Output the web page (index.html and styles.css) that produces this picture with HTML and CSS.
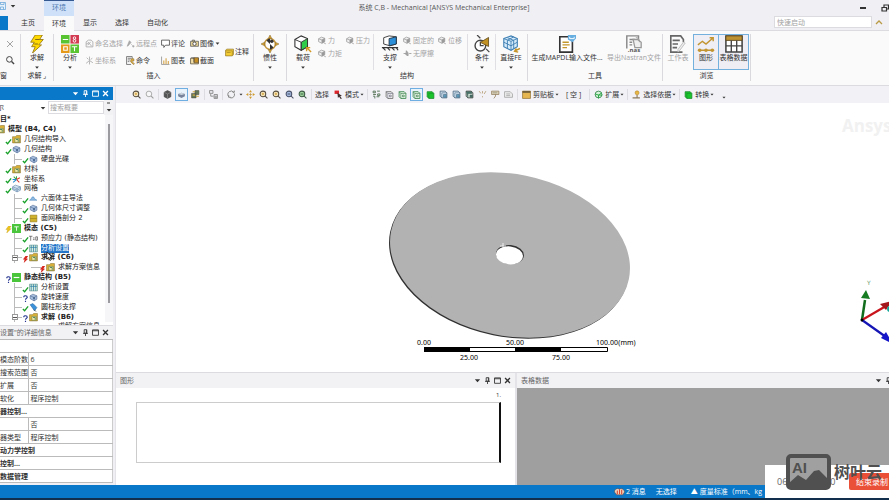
FILE: index.html
```html
<!DOCTYPE html>
<html lang="zh-CN">
<head>
<meta charset="utf-8">
<title>系统 C,B - Mechanical [ANSYS Mechanical Enterprise]</title>
<link rel="stylesheet" href="styles.css">
</head>
<body>
<svg class="sprite" aria-hidden="true">
  <symbol id="caret" viewBox="0 0 8 8"><path d="M1 2.5h6L4 6z" fill="currentColor"/></symbol>
  <symbol id="pin" viewBox="0 0 8 8"><path d="M2.5 .8h3v4h-3zM1.2 5h5.6M4 5v3M5 1v4" fill="none" stroke="currentColor" stroke-width="1"/></symbol>
  <symbol id="max" viewBox="0 0 8 8"><path d="M.6 1h6.8v6.200H.6zM.6 2h6.800" fill="none" stroke="currentColor" stroke-width="1"/></symbol>
  <symbol id="x" viewBox="0 0 8 8"><path d="M1.200 1.200l5.600 5.600M6.800 1.200L1.200 6.800" stroke="currentColor" stroke-width="1.500"/></symbol>
  <symbol id="thinx" viewBox="0 0 8 8"><path d="M1 1l6 6M7 1L1 7" stroke="#999" stroke-width=".9"/></symbol>
  <symbol id="search" viewBox="0 0 16 16"><circle cx="7" cy="7" r="4.500" fill="none" stroke="#444" stroke-width="1.600"/><path d="M10.500 10.500l4 4" stroke="#444" stroke-width="2.200"/></symbol>
  <symbol id="save" viewBox="0 0 16 16"><path d="M1 1h14v14H1zM5 1v4h7V1M5 15v-5h6v5" fill="#e7f1fb" stroke="#69a5d9" stroke-width="1.500"/></symbol>
  <symbol id="bolt" viewBox="0 0 16 20"><path d="M6 0h8l-3 5h4l-5 6h3L3 20l3-7H2l3-5H1z" fill="#ffd900" stroke="#9a7a16" stroke-width="1"/><path d="M6 5h5M5 10h4" stroke="#776018"/></symbol>
  <symbol id="analysis" viewBox="0 0 20 20"><path d="M0 0h9.500v9.500H0zM10.500 10.500H20V20h-9.500z" fill="#59c432"/><path d="M10.500 0H20v9.500h-9.500z" fill="#d23b52"/><path d="M0 10.500h9.500V20H0z" fill="#e69a1c"/><path d="M2 5h6M12 13h6M15 13v5M3 13v4h4v-4z" stroke="#fff" stroke-width="1.200" fill="none"/><circle cx="15" cy="3.400" r="1.400" fill="none" stroke="#fff"/><circle cx="15" cy="6.500" r="1.500" fill="none" stroke="#fff"/></symbol>
  <symbol id="named" viewBox="0 0 16 16"><path d="M2 14V5l4-3h5l3 3v9zM5 11l5-6M5 5l7 8M2 9l4-1" fill="none" stroke="#aaa" stroke-width="1.500"/></symbol>
  <symbol id="remote" viewBox="0 0 16 16"><path d="M2 13L6 3l3 3-6 7" fill="#aaa" stroke="#999"/><path d="M9 9l3 3" stroke="#aaa"/><circle cx="13" cy="13" r="2" fill="#aaa"/></symbol>
  <symbol id="axes-g" viewBox="0 0 16 16"><path d="M8 8V1M8 8l6 4M8 8l-6 5M3 3l3 3M13 4l-3 2M8 9v6" stroke="#aaa" stroke-width="1.500"/></symbol>
  <symbol id="axes" viewBox="0 0 16 16"><path d="M8 8V2M3 3l4 4" stroke="#3ba344" stroke-width="1.800"/><path d="M8 8l6-3M8 8l5 5" stroke="#d32" stroke-width="1.800"/><path d="M8 8l-6 5M1 8h6" stroke="#268bd0" stroke-width="1.800"/></symbol>
  <symbol id="comment" viewBox="0 0 16 16"><path d="M1 2h14v9H8l-3 4v-4H1z" fill="#fff" stroke="#444" stroke-width="1.400"/></symbol>
  <symbol id="camera" viewBox="0 0 16 16"><path d="M1 4h14v9H1zM4 4V2h4v2" fill="#ead594" stroke="#555" stroke-width="1.300"/><circle cx="8" cy="8.500" r="3" fill="#fff" stroke="#444" stroke-width="1.500"/></symbol>
  <symbol id="command" viewBox="0 0 16 16"><path d="M1 1h10v5M1 1v14h8M3 4h6M3 7h4M3 10h3" fill="none" stroke="#555" stroke-width="1.300"/><path d="M9 5h5v4h-4l5 5-2 1-5-5z" fill="#e4b343" stroke="#876b2d"/></symbol>
  <symbol id="chart" viewBox="0 0 16 16"><path d="M1 1v14h14" stroke="#777" stroke-width="1.200" fill="none"/><path d="M4 14V8h2v6M8 14V4h2v10M12 14V9h2v5" fill="#d5a64b"/></symbol>
  <symbol id="section" viewBox="0 0 16 16"><path d="M1 4h14v10H1z" fill="#f3e0a9" stroke="#544a35" stroke-width="1.300"/><path d="M7 3h8v9H7z" fill="#c48d26" stroke="#4b4234"/><path d="M2 3h5v8" fill="none" stroke="#444"/></symbol>
  <symbol id="note" viewBox="0 0 16 16"><path d="M1 4l2-2h12v10l-2 2H1z" fill="#f4cc34" stroke="#8d711e" stroke-width="1.200"/><path d="M1 5h12v8M3 8h7" fill="none" stroke="#8d711e"/></symbol>
  <symbol id="inertia" viewBox="0 0 20 20"><circle cx="10" cy="10" r="6" fill="#fff" stroke="#c4963b" stroke-width="1.700"/><path d="M10 0l2 4H8zM10 20l2-4H8zM0 10l4-2v4zM20 10l-4-2v4z" fill="#d6a02a" stroke="#876d34" stroke-width=".6"/><path d="M10 10L6 6a6 6 0 0 1 4-2zM10 10l4 4a6 6 0 0 1-4 2z" fill="#333"/><circle cx="12" cy="7" r="2" fill="#333"/></symbol>
  <symbol id="load" viewBox="0 0 20 20"><path d="M1 5l7-4 7 3v9l-7 4-7-4z" fill="#fff" stroke="#333" stroke-width="1.200"/><path d="M8 8l7-4v9l-7 4z" fill="#32cc4b" stroke="#333"/><path d="M1 5l7 3v9" fill="none" stroke="#333"/><path d="M19 19l-5-5M14 18v-4h4" stroke="#d39822" stroke-width="1.500" fill="none"/></symbol>
  <symbol id="cube-g" viewBox="0 0 16 16"><path d="M1 5l5-3 6 2v6l-5 3-6-3zM1 5l6 2v6M7 7l5-3M10 12l4 2" fill="#eee" stroke="#999" stroke-width="1.300"/><path d="M7 7l5-3v6l-5 3z" fill="#999"/></symbol>
  <symbol id="fric" viewBox="0 0 16 16"><path d="M1 8h5M15 8h-4M6 3l3 4v5l-4-2z" fill="#aaa" stroke="#999" stroke-width="1.500"/></symbol>
  <symbol id="support" viewBox="0 0 20 20"><path d="M3 3l6-2 8 1v8l-7 2-7-2z" fill="#fff" stroke="#333"/><path d="M9 4l8-2v8l-8 2z" fill="#2a8fd8" stroke="#234"/><path d="M1 14h18M2 14l3 3M7 14l3 3M12 14l3 3M17 14l2 3" stroke="#333" stroke-width="1.300"/></symbol>
  <symbol id="cond" viewBox="0 0 20 22"><circle cx="8" cy="13" r="6.500" fill="#fff" stroke="#444" stroke-width="1.700"/><path d="M8 8v5h4M4 0l4 4M15 17l4 4" fill="none" stroke="#444" stroke-width="1.500"/><path d="M8 9l10-6v11z" fill="#c29123" stroke="#604b1c"/></symbol>
  <symbol id="fe" viewBox="0 0 20 20"><path d="M2 4l8-3 7 3v9l-7 4-8-4z" fill="#d7ecfb" stroke="#3d7eb2" stroke-width="1.200"/><path d="M2 4l8 3v10M10 7l7-3M2 8l8 4 7-4M6 3l7 3v9M13 2L6 6v9" fill="none" stroke="#3d7eb2"/><path d="M20 15l-6 3M16 15l-2 3 4 1" stroke="#c69429" fill="none" stroke-width="1.600"/></symbol>
  <symbol id="mapdl" viewBox="0 0 20 20"><path d="M2 2h11l3 3v14H2z" fill="#fff" stroke="#333" stroke-width="1.800"/><path d="M5 8h7M5 11h8M5 14h5" stroke="#c4972c" stroke-width="1.600"/><path d="M11 0h9v4l-4 4-5-3z" fill="#67aee0"/><path d="M13 2v2h5V2" stroke="#fff" fill="none"/></symbol>
  <symbol id="nas" viewBox="0 0 20 20"><path d="M2 15V1h13v4M5 5h6M5 8h3M5 11h3" fill="none" stroke="#888" stroke-width="1.600"/><path d="M9 5h5l4 3v6h-7z" fill="#eee" stroke="#999" stroke-width="1.400"/><path d="M12 3c4 0 4 3 4 5" stroke="#999" fill="none"/></symbol>
  <symbol id="sheet" viewBox="0 0 20 20"><path d="M16 8V5l-3-4H2v18h13M4 6h8M4 10h6M4 14h5" fill="none" stroke="#666" stroke-width="1.800"/><path d="M18 9l-6 8-2 2v-3l6-8z" fill="#eee" stroke="#bbb"/></symbol>
  <symbol id="graph" viewBox="0 0 20 20"><path d="M1 11l5-4 4 3 8-7M14 3h4v4M1 17h18" fill="none" stroke="#c39531" stroke-width="1.600"/><circle cx="3" cy="17" r="2" fill="#c39531"/><circle cx="10" cy="17" r="2" fill="#c39531"/><circle cx="17" cy="17" r="2" fill="#c39531"/></symbol>
  <symbol id="grid" viewBox="0 0 20 20"><path d="M1 1h18v18H1z" fill="#fff" stroke="#444" stroke-width="1.700"/><path d="M1 1h18v5H1z" fill="#bd9130" stroke="#604b20"/><path d="M1 12h18M7 6v13M13 6v13" stroke="#444" stroke-width="1.500"/></symbol>
  <symbol id="restore" viewBox="0 0 8 8"><path d="M1 3.500h4.500V7H1zM3 3V1h4.500v4H6" fill="none" stroke="#333" stroke-width="1.200"/></symbol>
  <symbol id="zin" viewBox="0 0 16 16"><circle cx="7" cy="7" r="5" fill="#fff3cf" stroke="#594f40" stroke-width="1.800"/><path d="M4.500 7h5M7 4.500v5" stroke="#c79025" stroke-width="1.400"/><path d="M11 11l4 4" stroke="#4e4942" stroke-width="2"/></symbol>
  <symbol id="zout" viewBox="0 0 16 16"><circle cx="7" cy="7" r="5" fill="#f7f7f9" stroke="#999" stroke-width="1.400"/><path d="M11 11l4 4" stroke="#999" stroke-width="2"/></symbol>
  <symbol id="zblue" viewBox="0 0 16 16"><circle cx="7" cy="7" r="5" fill="#a7bde2" stroke="#4c536c" stroke-width="1.800"/><path d="M4.500 7h5M11 11l4 4" stroke="#495063" stroke-width="1.800"/></symbol>
  <symbol id="zgreen" viewBox="0 0 16 16"><circle cx="7" cy="7" r="5" fill="#9bd19a" stroke="#405b48" stroke-width="1.800"/><path d="M4.500 7h5M11 11l4 4" stroke="#406146" stroke-width="1.800"/></symbol>
  <symbol id="solid" viewBox="0 0 16 16"><path d="M2 4l6-3 6 3v8l-6 3-6-3z" fill="#555" stroke="#444"/><path d="M2 4l6 3 6-3M8 7v8" fill="none" stroke="#999"/></symbol>
  <symbol id="slab" viewBox="0 0 16 16"><path d="M2 7l6-2 6 2v4l-6 3-6-3z" fill="#76839a"/><path d="M2 7l6 2 6-2-6-2z" fill="#ccd5e0"/></symbol>
  <symbol id="multi" viewBox="0 0 16 16"><path d="M1 6h8v8H1zM7 1h7v7H7z" fill="#63795a" stroke="#4e4e3e"/><path d="M3 3h4M9 11h5M3 9h4" stroke="#d3a93c" stroke-width="2"/></symbol>
  <symbol id="link" viewBox="0 0 16 16"><path d="M1 1h6v5H1zM9 8h6v7H9zM3 7v4h5" fill="#e8e8ee" stroke="#777" stroke-width="1.300"/><path d="M10 11h4M10 13h4" stroke="#555"/></symbol>
  <symbol id="rot" viewBox="0 0 16 16"><path d="M3 12a6 6 0 0 1 1-9 6 6 0 0 1 8 1M13 6a6 6 0 0 1-7 8M10 4h3V1M3 9v4h4" fill="none" stroke="#777" stroke-width="1.500"/></symbol>
  <symbol id="pan" viewBox="0 0 16 16"><path d="M8 0l2.500 4h-5zM8 16l2.500-4h-5zM0 8l4-2.500v5zM16 8l-4-2.500v5z" fill="#d19a29"/><path d="M8 5v6M5 8h6" stroke="#b58628"/></symbol>
  <symbol id="arrow" viewBox="0 0 16 16"><path d="M1 1h8v6H1z" fill="#d9252b"/><path d="M6 5l8 5-3 1 3 4-2 1-3-4-2 2z" fill="#403030"/></symbol>
  <symbol id="pts" viewBox="0 0 16 16"><path d="M2 2h4v3H2zM9 2h5M2 8h5M10 7h4v3h-4zM2 11h3v4M8 12h5" fill="none" stroke="#59765a" stroke-width="1.700"/></symbol>
  <symbol id="fbox" viewBox="0 0 16 16"><path d="M2 3h9l3 3v9H5l-3-3z" fill="#f7f8fa" stroke="#555" stroke-width="1.300"/><path d="M5 6h9M5 6v9M2 3l3 3M8 9h3v3H8z" fill="none" stroke="#667" stroke-width="1.200"/></symbol>
  <symbol id="gbox" viewBox="0 0 16 16"><path d="M2 3h9l3 3v9H5l-3-3z" fill="#effbef" stroke="#368449" stroke-width="1.500"/><path d="M5 6h9M5 6v9M2 3l3 3M8 9h3v3H8z" fill="none" stroke="#397b47" stroke-width="1.200"/></symbol>
  <symbol id="green" viewBox="0 0 16 16"><path d="M2 3h9l3 3v9H5l-3-3z" fill="#19c52b" stroke="#178529" stroke-width="1.300"/><path d="M5 6h9M5 6v9" stroke="#178529"/></symbol>
  <symbol id="bbox" viewBox="0 0 16 16"><path d="M2 2h9l3 3v9H5l-3-3z" fill="#d5e4f3" stroke="#45617b" stroke-width="1.400"/><path d="M5 5h9M5 5v9M8 8h5v5H8z" fill="#5d9bbd" stroke="#41647b"/></symbol>
  <symbol id="dbox" viewBox="0 0 16 16"><path d="M2 2h9l3 3v9H5l-3-3z" fill="#cde2d6" stroke="#333" stroke-width="1.400"/><path d="M2 3h10v3H5v8M9 9h4v4H9z" fill="#4b7b71" stroke="#384d4a"/></symbol>
  <symbol id="vec" viewBox="0 0 16 16"><path d="M2 2l3 4M8 6V2M14 2l-3 5M8 11v2" stroke="#b69b73" stroke-width="1.500"/></symbol>
  <symbol id="flag" viewBox="0 0 16 16"><path d="M1 2h13v6H1zM8 8v3l-3 4" fill="#ddd3b8" stroke="#8e7a5a" stroke-width="1.300"/><path d="M3 5h8" stroke="#776"/></symbol>
  <symbol id="tag" viewBox="0 0 16 16"><path d="M1 3h10l4 4v6H1zM4 7h7M4 10h7" fill="#eee" stroke="#999" stroke-width="1.300"/></symbol>
  <symbol id="clip" viewBox="0 0 16 16"><path d="M1 2h14v13H1z" fill="#e6b750" stroke="#8b6a26" stroke-width="1.200"/><path d="M1 2h14v3H1z" fill="#6a5a38"/></symbol>
  <symbol id="ext" viewBox="0 0 16 16"><circle cx="8" cy="8" r="6" fill="#d5f3d8" stroke="#33824a" stroke-width="1.500"/><path d="M2 7l6 2 6-4M8 9v6M8 9h7" fill="none" stroke="#28a745" stroke-width="1.700"/></symbol>
  <symbol id="person" viewBox="0 0 16 16"><circle cx="9" cy="5" r="3.500" fill="#e9b743" stroke="#b08222"/><path d="M9 9v4M1 14h13" stroke="#8b7a5d" stroke-width="2"/></symbol>
  <symbol id="check" viewBox="0 0 8 8"><path d="M1 4.500l2 2L7 1.500" fill="none" stroke="#19a12a" stroke-width="1.500"/></symbol>
  <symbol id="q" viewBox="0 0 8 8"><path d="M2 2.500c0-2.500 4-2 4 0C6 4 4 3.500 4 5.500M4 6.500V8" fill="none" stroke="#24348f" stroke-width="1.300"/></symbol>
  <symbol id="rbolt" viewBox="0 0 8 8"><path d="M4 0h3L5 3h2L2 8l1-4H1z" fill="#d6261f"/></symbol>
  <symbol id="ybolt" viewBox="0 0 8 8"><path d="M4 0h3L5 3h2L2 8l1-4H1z" fill="#efc51b" stroke="#c39c1c" stroke-width=".4"/></symbol>
  <symbol id="t-box" viewBox="0 0 16 16"><path d="M1 3h5l2-2h7v13H1z" fill="#dcb338" stroke="#857030"/><path d="M5 6h8v7H5z" fill="#f6e9a9" stroke="#5c7747"/><path d="M7 8h4v4" stroke="#3d7b55" fill="none" stroke-width="1.500"/></symbol>
  <symbol id="t-cube" viewBox="0 0 16 16"><path d="M2 5l5-3 7 3v6l-5 3-7-4z" fill="#a9bfdf" stroke="#46628c"/><path d="M2 5l7 3v6M9 8l5-3" stroke="#46628c" fill="none"/><circle cx="9" cy="9" r="2" fill="#49698f"/></symbol>
  <symbol id="t-mesh" viewBox="0 0 16 16"><path d="M1 5l5-3 9 3v6l-6 3-8-4z" fill="#d6e5f3" stroke="#52799f"/><path d="M1 5l8 3v6M9 8l6-3M1 8l8 3 6-3" stroke="#52799f" fill="none"/></symbol>
  <symbol id="t-wave" viewBox="0 0 16 16"><path d="M1 11c3 0 3-6 6-6s2 5 7 6z" fill="#8fbbe3" stroke="#4785bd"/></symbol>
  <symbol id="t-face" viewBox="0 0 16 16"><path d="M2 2h12v12H2z" fill="#d1b22c" stroke="#8f7a1c"/><path d="M2 8h12" stroke="#8f7a1c"/></symbol>
  <symbol id="t-modal" viewBox="0 0 16 16"><path d="M0 0h16v16H0z" fill="#4bc63c"/><path d="M4 5h8M8 5v7" stroke="#fff" stroke-width="1.500"/></symbol>
  <symbol id="t-static" viewBox="0 0 16 16"><path d="M0 0h16v16H0z" fill="#4bc63c"/><path d="M3 8h10" stroke="#fff" stroke-width="2"/></symbol>
  <symbol id="t-pre" viewBox="0 0 16 16"><path d="M0 4h6M3 4v8M7 7h3M7 10h3M12 5h3v6h-3z" stroke="#555" fill="none" stroke-width="1.300"/></symbol>
  <symbol id="t-set" viewBox="0 0 16 16"><path d="M1 2h14v12H1z" fill="#d9eddf" stroke="#4d8877"/><path d="M4 2v12M8 2v12M12 2v12M2 6h12" stroke="#2f7fa5" stroke-width="1.300"/></symbol>
  <symbol id="t-rod" viewBox="0 0 16 16"><path d="M2 3l5-2 7 7-4 6z" fill="#3d93db" stroke="#24669f"/><path d="M8 12l5 3" stroke="#444"/></symbol>
</svg>

<header class="titlebar">
  <div class="quick"><svg class="i8"><use href="#save"/></svg><svg class="i6"><use href="#caret"/></svg></div>
  <span class="context">环境</span>
  <h1>系统 C,B - Mechanical [ANSYS Mechanical Enterprise]</h1>
  <div class="winbtns"><button aria-label="最小化"><i class="dash"></i></button><button aria-label="还原"><svg class="i8"><use href="#restore"/></svg></button></div>
</header>
<nav class="tabs">
  <span class="file"></span>
  <button>主页</button><button class="on">环境</button><button>显示</button><button>选择</button><button>自动化</button>
  <input class="launch" placeholder="快速启动" aria-label="快速启动">
  <svg class="up" viewBox="0 0 8 6"><path d="M1 5l3-3 3 3" fill="none" stroke="#b99a45" stroke-width="1.300"/></svg>
</nav>

<section class="ribbon">
  <div class="group g-find"><div class="body col"><button aria-label="清除"><svg class="i8"><use href="#thinx"/></svg></button><button aria-label="查找"><svg class="i10"><use href="#search"/></svg></button></div><p>窗</p></div>
  <div class="group g-solve"><div class="body"><button class="big"><svg><use href="#bolt"/></svg>求解<svg class="dd"><use href="#caret"/></svg></button></div><p>求解 ⌟</p></div>
  <div class="group g-insert"><div class="body">
    <button class="big"><svg><use href="#analysis"/></svg>分析<svg class="dd"><use href="#caret"/></svg></button>
    <div class="minis">
      <button class="off"><svg><use href="#named"/></svg>命名选择</button><button class="off"><svg><use href="#remote"/></svg>远程点</button><button><svg><use href="#comment"/></svg>评论</button><button><svg><use href="#camera"/></svg>图像<svg class="dd"><use href="#caret"/></svg></button>
      <button class="off"><svg><use href="#axes-g"/></svg>坐标系</button><button><svg><use href="#command"/></svg>命令</button><button><svg><use href="#chart"/></svg>图表</button><button><svg><use href="#section"/></svg>截面</button>
    </div>
    <button class="mini note"><svg><use href="#note"/></svg>注释</button>
  </div><p>插入</p></div>
  <div class="group g-inertia"><div class="body"><button class="big"><svg><use href="#inertia"/></svg>惯性<svg class="dd"><use href="#caret"/></svg></button></div></div>
  <div class="group g-struct"><div class="body">
    <div class="sub s-load"><button class="big"><svg><use href="#load"/></svg>载荷<svg class="dd"><use href="#caret"/></svg></button>
      <div class="minis two"><button class="off"><svg><use href="#cube-g"/></svg>力</button><button class="off"><svg><use href="#cube-g"/></svg>压力</button><button class="off"><svg><use href="#cube-g"/></svg>力矩</button></div></div>
    <div class="sub s-sup"><button class="big"><svg><use href="#support"/></svg>支撑<svg class="dd"><use href="#caret"/></svg></button>
      <div class="minis two wide"><button class="off"><svg><use href="#cube-g"/></svg>固定的</button><button class="off"><svg><use href="#cube-g"/></svg>位移</button><button class="off"><svg><use href="#fric"/></svg>无摩擦</button></div></div>
    <div class="sub s-one"><button class="big"><svg><use href="#cond"/></svg>条件<svg class="dd"><use href="#caret"/></svg></button></div>
    <div class="sub s-last"><button class="big"><svg><use href="#fe"/></svg>直接FE<svg class="dd"><use href="#caret"/></svg></button></div>
  </div><p>结构</p></div>
  <div class="group g-tools"><div class="body"><button class="big mapdl"><svg><use href="#mapdl"/></svg>生成MAPDL输入文件...</button><button class="big nas off"><svg><use href="#nas"/></svg><b>.nas</b>导出Nastran文件</button></div><p>工具</p></div>
  <div class="group g-view"><div class="body"><button class="big off sheet"><svg><use href="#sheet"/></svg>工作表</button><button class="big sel"><svg><use href="#graph"/></svg>图形</button><button class="big sel tbl"><svg><use href="#grid"/></svg>表格数据</button></div><p>浏览</p></div>
</section>

<main>
  <aside>
    <div class="bar blue"><span></span><svg><use href="#caret"/></svg><svg><use href="#pin"/></svg><svg><use href="#max"/></svg><svg><use href="#x"/></svg></div>
    <div class="filter"><select aria-label="名称"><option>尔</option></select><svg class="i6"><use href="#caret"/></svg><input placeholder="搜索概要" aria-label="搜索概要"><div class="spin"><i></i><svg class="i6"><use href="#caret"/></svg></div></div>
    <div class="outline">
      <ul class="tree">
        <li class="l0 b">目*</li>
        <li class="l0 b"><svg class="cut"><use href="#t-box"/></svg>模型 (B4, C4)</li>
        <li class="l1"><svg class="st"><use href="#check"/></svg><svg><use href="#t-box"/></svg>几何结构导入</li>
        <li class="l1"><svg class="st"><use href="#check"/></svg><svg><use href="#t-cube"/></svg>几何结构</li>
        <li class="l2"><svg class="st"><use href="#check"/></svg><svg><use href="#t-cube"/></svg>硬盘光碟</li>
        <li class="l1"><svg class="st"><use href="#check"/></svg><svg><use href="#t-box"/></svg>材料</li>
        <li class="l1"><svg class="st"><use href="#check"/></svg><svg><use href="#axes"/></svg>坐标系</li>
        <li class="l1"><svg class="st"><use href="#check"/></svg><svg><use href="#t-mesh"/></svg>网格</li>
        <li class="l2"><svg class="st"><use href="#check"/></svg><svg><use href="#t-wave"/></svg>六面体主导法</li>
        <li class="l2"><svg class="st"><use href="#check"/></svg><svg><use href="#t-cube"/></svg>几何体尺寸调整</li>
        <li class="l2"><svg class="st"><use href="#check"/></svg><svg><use href="#t-face"/></svg>面网格剖分 2</li>
        <li class="l1 b"><svg class="st"><use href="#ybolt"/></svg><svg><use href="#t-modal"/></svg>模态 (C5)</li>
        <li class="l2"><svg class="st"><use href="#check"/></svg><svg><use href="#t-pre"/></svg>预应力 (静态结构)</li>
        <li class="l2"><svg class="st"><use href="#check"/></svg><svg><use href="#t-set"/></svg><mark>分析设置</mark></li>
        <li class="l2 b box"><svg class="st"><use href="#rbolt"/></svg><svg><use href="#t-box"/></svg>求解 (C6)<svg class="cursor" viewBox="0 0 8 10"><path d="M1 0v8l2-2 1.500 3.500 1.500-.8L4.500 5.500H7z" fill="#fff" stroke="#000" stroke-width=".8"/></svg></li>
        <li class="l3"><svg class="st"><use href="#rbolt"/></svg><svg><use href="#t-box"/></svg>求解方案信息</li>
        <li class="l1 b"><svg class="st"><use href="#q"/></svg><svg><use href="#t-static"/></svg>静态结构 (B5)</li>
        <li class="l2"><svg class="st"><use href="#check"/></svg><svg><use href="#t-set"/></svg>分析设置</li>
        <li class="l2"><svg class="st"><use href="#q"/></svg><svg><use href="#t-cube"/></svg>旋转速度</li>
        <li class="l2"><svg class="st"><use href="#check"/></svg><svg><use href="#t-rod"/></svg>圆柱形支撑</li>
        <li class="l2 b box"><svg class="st"><use href="#q"/></svg><svg><use href="#t-box"/></svg>求解 (B6)</li>
      </ul>
      <div class="scroll"><i></i></div>
    </div>
    <div class="peek">求解方案信息</div>
    <div class="bar details-bar"><span>设置"的详细信息</span><svg><use href="#caret"/></svg><svg><use href="#pin"/></svg><svg><use href="#max"/></svg><svg><use href="#x"/></svg></div>
    <table>
      <colgroup><col class="key"><col></colgroup>
      <tr><th colspan="2"></th></tr>
      <tr><td>模态阶数</td><td>6</td></tr>
      <tr><td>搜索范围</td><td>否</td></tr>
      <tr><td>扩展</td><td>否</td></tr>
      <tr><td>软化</td><td>程序控制</td></tr>
      <tr><th colspan="2">器控制...</th></tr>
      <tr><td></td><td>否</td></tr>
      <tr><td>器类型</td><td>程序控制</td></tr>
      <tr><th colspan="2">动力学控制</th></tr>
      <tr><th colspan="2">控制...</th></tr>
      <tr><th colspan="2">数据管理</th></tr>
    </table>
  </aside>

  <section class="work">
    <div class="tools">
      <svg><use href="#zin"/></svg><svg><use href="#zout"/></svg><hr>
      <svg><use href="#solid"/></svg><svg class="on"><use href="#slab"/></svg><svg><use href="#multi"/></svg><hr>
      <svg><use href="#link"/></svg><hr>
      <svg><use href="#rot"/></svg><svg class="dd"><use href="#caret"/></svg><svg><use href="#pan"/></svg><svg><use href="#zin"/></svg><svg><use href="#zin"/></svg><svg><use href="#zblue"/></svg><svg><use href="#zgreen"/></svg><hr>
      <span class="pick">选择</span><button><svg><use href="#arrow"/></svg>模式<svg class="dd"><use href="#caret"/></svg></button><hr>
      <svg><use href="#pts"/></svg><svg><use href="#fbox"/></svg><svg><use href="#gbox"/></svg><svg class="on"><use href="#gbox"/></svg><svg><use href="#green"/></svg><svg><use href="#bbox"/></svg><svg><use href="#bbox"/></svg><svg><use href="#dbox"/></svg><svg><use href="#vec"/></svg><svg><use href="#flag"/></svg><svg><use href="#tag"/></svg><hr>
      <button><svg><use href="#clip"/></svg>剪贴板<svg class="dd"><use href="#caret"/></svg></button>
      <span class="empty">[ 空 ]</span><hr>
      <button><svg><use href="#ext"/></svg>扩展<svg class="dd"><use href="#caret"/></svg></button><hr>
      <button><svg><use href="#person"/></svg>选择依据<svg class="dd"><use href="#caret"/></svg></button><hr>
      <button><svg><use href="#green"/></svg>转换<svg class="dd"><use href="#caret"/></svg></button><svg class="dd end"><use href="#caret"/></svg>
    </div>
    <div class="view">
      <svg viewBox="116 103 773 269" preserveAspectRatio="xMidYMid slice">
        <text x="842" y="132" class="brand">Ansys</text>
        <ellipse cx="509" cy="256" rx="121.300" ry="80.800" transform="rotate(11.400 509 256)" fill="#303030"/>
        <ellipse cx="510" cy="255" rx="121.300" ry="80.800" transform="rotate(11.400 510 255)" fill="#b2b2b2"/>
        <ellipse cx="510" cy="254.500" rx="14" ry="9.500" transform="rotate(6 510 254)" fill="#333"/>
        <ellipse cx="509.500" cy="255.300" rx="13.500" ry="9" transform="rotate(6 509 255)" fill="#fff"/>
        <path d="M503 243v6M500 246h6" stroke="#fff" stroke-width=".8"/>
        <path d="M424.500 347.500h183v4h-183z" fill="#fff" stroke="#000"/>
        <path d="M424 347h46v5h-46zM515 347h46v5h-46z"/>
        <g class="scale"><text x="424" y="345">0.00</text><text x="515" y="345">50.00</text><text x="607" y="345">100.00</text><text x="627" y="345">(mm)</text><text x="469" y="360">25.00</text><text x="561" y="360">75.00</text></g>
        <path d="M862 320l3-20" stroke="#126d1d" stroke-width="2.500"/><path d="M866 290l4 9-9-1z" fill="#167c22"/>
        <path d="M862 320l24-14" stroke="#c8141c" stroke-width="2.200"/><path d="M880 304l12-3-6 9z" fill="#a3161b"/>
        <path d="M862 320l24 17" stroke="#1515b5" stroke-width="2.200"/><path d="M881 338l5-6 7 12z" fill="#1515c9"/>
        <circle cx="890" cy="309" r="3" fill="#13a79a"/><circle cx="862" cy="320" r="1.500"/>
        <text x="867" y="285" class="y">Y</text>
      </svg>
    </div>
    <div class="docks">
      <section class="dock graph"><div class="bar"><span>图形</span><svg><use href="#caret"/></svg><svg><use href="#pin"/></svg><svg><use href="#max"/></svg><svg><use href="#x"/></svg></div>
        <div class="plot"><small>1.</small><div class="frame"></div></div></section>
      <section class="dock data"><div class="bar"><span>表格数据</span><svg><use href="#caret"/></svg><svg><use href="#pin"/></svg></div><div class="blank"></div></section>
    </div>
  </section>
</main>
<footer><svg class="msg" viewBox="0 0 20 14"><path d="M1 8c0-7 7-7 9-5 3-3 9 0 9 5l-3 5H5z" fill="#f2d9c2" stroke="#784735"/><path d="M6 5v7M10 3v9M14 4v8" stroke="#d8452f" stroke-width="2"/></svg><span>2 消息</span><span>无选择</span><span class="units">▲ 度量标准（mm、kg</span></footer>

<div class="recorder"><span>06</span><span class="tail">0</span><button>结束录制</button></div>
<div class="mark"><svg viewBox="0 0 45 36"><rect x="2" y="2" width="41" height="32" rx="3" fill="#a0a0a0" stroke="#505050" stroke-width="4"/><path d="M3 29l9-8 8 5 8-9 5-1 9 9v9H3z" fill="#505050"/></svg><b class="ai">AI</b><b>树叶云</b></div>
</body>
</html>
```
FILE: styles.css
```css
* { box-sizing: border-box; }
body {
  margin: 0; height: 100vh; display: flex; flex-direction: column; overflow: hidden; position: relative;
  font: 7px/10px "Open Sans", "Noto Sans CJK SC", sans-serif; color: #333; background: #f0f0f4;
}
button, input, select { font: inherit; color: inherit; border: 0; padding: 0; margin: 0; background: none; border-radius: 0; }
button { display: flex; align-items: center; white-space: nowrap; }
svg { flex: none; display: block; }
h1, p, ul { margin: 0; padding: 0; font: inherit; list-style: none; }
.sprite { position: absolute; width: 0; height: 0; }
.i6 { width: 6px; height: 6px; }
.i8 { width: 8px; height: 8px; }
.i10 { width: 10px; height: 10px; }

/* title bar and tabs */
.titlebar { height: 16px; flex: none; display: grid; grid-template-columns: 44px 30px 1fr 35px; }
.quick { display: flex; gap: 4px; margin-left: -2px; padding-top: 2px; }
.quick .i6 { margin-top: 1px; }
.context { background: #cfe1f8; border-top: 1px solid #34588f; color: #4d79b0; text-align: center; line-height: 13px; }
.titlebar h1 { justify-self: center; font-size: 7px; line-height: 15px; color: #555; margin-right: 40px; }
.winbtns { display: flex; justify-content: space-between; align-items: center; padding-left: 6px; }
.dash { width: 6px; height: 2px; background: #333; }
.tabs { height: 15px; flex: none; display: flex; align-items: stretch; border-bottom: 1px solid #dcdce0; }
.file { width: 8px; background: #0a78c8; }
.tabs button { padding: 0 9px; }
.tabs button:first-of-type { padding: 0 9px 0 13px; }
.tabs .on { background: #fafafb; padding: 0 8px; margin-bottom: -1px; }
.tabs .launch { margin-left: auto; width: 98px; height: 12px; background: #fff; border: 1px solid #dcdce0; padding-left: 2px; }
::placeholder { color: #a2a2a2; opacity: 1; }
.up { width: 8px; height: 6px; margin: 3px 6px 0 3px; }

/* ribbon */
.ribbon { height: 55px; flex: none; display: flex; background: #fafafb; border-bottom: 1px solid #dcdce0; padding-top: 3px; }
.group { display: flex; flex-direction: column; border-right: 1px solid #dadade; margin-bottom: 4px; flex: none; }
.group .body { display: flex; height: 38px; }
.group p { text-align: center; line-height: 11px; }
.g-find { width: 21px; } .g-solve { width: 33px; } .g-insert { width: 200px; } .g-inertia { width: 33px; }
.g-struct { width: 241px; } .g-tools { width: 135px; } .g-view { width: 88px; }
.g-find .col { flex-direction: column; align-items: center; justify-content: space-around; padding: 3px 0 2px; }
.g-find p { text-align: left; }
.big { flex-direction: column; flex: none; width: 32px; line-height: 9px; padding-top: 1px; }
.big > svg { width: 18px; height: 18px; }
.big .dd { margin-top: 3px; }
.dd, .big .dd { width: 6px; height: 5px; }
.off { color: #a3a3a3; }
.minis { display: grid; grid-template-columns: 41px 35px 29px 30px; grid-auto-rows: 17px; padding-top: 1px; margin-left: -1px; }
.minis button, .mini { gap: 1px; }
.minis svg, .mini svg { width: 9px; height: 9px; }
.minis .dd { width: 5px; height: 5px; }
.note { margin-left: 5px; }
.sub { display: flex; border-right: 1px solid #e0e0e4; }
.s-load { width: 87px; } .s-sup { width: 94px; } .s-one { width: 28px; } .s-last { border: 0; }
.s-one .big, .s-last .big { width: 28px; }
.s-last .big { width: 30px; }
.minis.two { grid-template-columns: 28px 28px; grid-auto-rows: 13px; padding-top: 0; }
.minis.wide { grid-template-columns: 35px 28px; margin-left: -3px; }
.mapdl { width: 78px; } .nas { width: 56px; position: relative; }
.nas b { position: absolute; top: 12px; font-size: 6px; color: #555; }
.sheet { width: 30px; }
.sel { width: 26px; border: 1px solid #73b0de; background: #eeeef4; padding-top: 0; }
.tbl { width: 31px; margin-left: -1px; }

/* side panel */
main { flex: 1; display: grid; grid-template: minmax(0, 1fr) / 116px 1fr; min-height: 0; }
aside { display: flex; flex-direction: column; padding: 1px 2px 2px 0; border-right: 1px solid #e3e3e8; min-width: 0; }
.bar { height: 14px; flex: none; display: flex; align-items: center; gap: 3px; padding-right: 4px; color: #333; background: #f2f2f5; }
.bar span { flex: 1; white-space: nowrap; overflow: hidden; color: #666; }
.bar svg { width: 7px; height: 7px; }
.blue { height: 13px; background: #0a78c8; color: #fff; }
.filter { height: 15px; flex: none; display: flex; align-items: center; background: #fff; }
.filter select { appearance: none; width: 40px; text-indent: -3px; }
.filter input { width: 56px; height: 13px; padding-left: 1px; margin-left: 2px; border: 1px solid #dcdce0; }
.spin { flex: 1; align-self: stretch; display: flex; flex-direction: column; align-items: center; justify-content: space-around; background: #f2f2f5; }
.spin i { width: 3px; height: 2px; background: #999; }
.outline { flex: 1; display: flex; background: #fff; min-height: 0; }
.tree { flex: 1; display: grid; grid-auto-rows: minmax(0, 1fr); font-family: "DejaVu Sans", "Noto Sans CJK SC", sans-serif; color: #222; min-width: 0; }
.tree li { display: flex; align-items: center; min-height: 0; white-space: nowrap; gap: 3px; line-height: 9px; position: relative; }
.tree svg { width: 9px; height: 9px; }
.tree .st { width: 7px; height: 7px; margin-top: 3px; margin-right: -3px; }
.tree .cut { margin-left: -4px; }
.b { font-weight: bold; }
.l1 { padding-left: 5px; }
.l2 { padding-left: 22px; }
.l3 { padding-left: 39px; }
.l2, .l3 { background: linear-gradient(#bbb, #bbb) 14px 0 / 1px 100% no-repeat, linear-gradient(#bbb, #bbb) 14px 50% / 8px 1px no-repeat; }
.l3 { background-size: 1px 0, 10px 1px; background-position: 14px 0, 31px 50%; }
.box::before { content: ""; box-sizing: border-box; position: absolute; left: 12px; top: 2px; width: 6px; height: 6px; border: 1px solid #999; background: linear-gradient(#555, #555) center / 100% 1px no-repeat #fff; }
.tree mark { background: #2475c8; color: #fff; }
.tree .cursor { position: absolute; left: 46px; top: -1px; width: 7px; height: 9px; }
.scroll { width: 8px; background: #f6f6f8; padding: 9px 0 19px 3px; display: flex; }
.scroll i { width: 2px; background: #9c9ca0; }
.peek { height: 3px; flex: none; overflow: hidden; line-height: 8px; padding-left: 58px; background: #fff; }
.details-bar { border-top: 1px solid #dcdce0; }
table { border-collapse: collapse; width: 100%; table-layout: fixed; background: #fff; flex: none; border-right: 1px solid #ccc; }
.key { width: 28px; }
td, th { height: 13px; padding: 0; border-top: 1px solid #bbb; border-bottom: 1px solid #bbb; text-align: left; line-height: 9px; white-space: nowrap; overflow: hidden; }
td:first-child { border-right: 1px solid #bbb; }
td + td { padding-left: 2px; }

/* work area */
.work { display: flex; flex-direction: column; min-width: 0; }
.tools { height: 17px; flex: none; display: flex; align-items: center; padding-left: 14px; background: #f2f2f6; overflow: hidden; }
.tools svg { width: 13px; height: 13px; padding: 2px; }
.tools .on { border: 1px solid #6eaee0; padding: 1px; background: #e9f3fb; margin: 0 1px; }
.tools .dd { width: 6px; height: 7px; padding: 1px; }
.tools hr { width: 1px; height: 11px; border: 0; margin: 0 2px; background: #dcdce2; }
.tools .pick { padding: 0 3px 0 1px; }
.tools .empty { padding: 0 6px; white-space: pre; }
.tools .end { margin-left: 6px; margin-top: 6px; }
.view { flex: 1; min-height: 0; background: #fff; overflow: hidden; }
.view svg { width: 100%; height: 100%; }
.scale { font: 7px "Noto Sans", sans-serif; text-anchor: middle; }
.brand { font: bold 17px "Open Sans", sans-serif; fill: #f1f1f1; }
.y { font: 6px "DejaVu Sans", sans-serif; fill: #6d9b71; }
.docks { height: 113px; flex: none; display: grid; grid-template-columns: 399fr 374fr; border-top: 1px solid #dcdce0; }
.dock { display: flex; flex-direction: column; min-width: 0; }
.dock .bar { padding-left: 4px; height: 15px; }
.data { border-left: 2px solid #e3e3e8; }
.data .bar { padding-right: 0; margin-right: -3px; }
.plot { flex: 1; background: #fff; padding: 2px 14px 22px 20px; display: flex; flex-direction: column; }
.plot small { font-size: 6px; line-height: 10px; align-self: flex-end; }
.frame { flex: 1; margin-top: 2px; border: 1px solid #ccc; border-right: 2px solid #111; }
.blank { flex: 1; background: #9f9f9f; }

footer { height: 15px; flex: none; display: flex; align-items: center; gap: 10px; background: #0a78c8; color: #fff; border-bottom: 2px solid #12304d; padding-left: 614px; white-space: nowrap; }
.msg { width: 11px; height: 9px; margin-right: -9px; }
.units { margin-left: 4px; }

/* screen recorder overlay */
.recorder { position: absolute; right: 0; bottom: 2px; width: 124px; height: 33px; display: flex; align-items: center; background: #fff; padding-left: 12px; font-size: 9px; color: #666; overflow: hidden; }
.tail { margin-left: 43px; }
.recorder button { margin-left: auto; width: 40px; height: 17px; flex: none; padding-left: 7px; background: #ea4f37; color: #fff; font-size: 8px; border-radius: 2px 0 0 2px; overflow: hidden; }
.mark { position: absolute; right: 7px; bottom: 10px; display: flex; align-items: center; gap: 3px; color: #505050; font-size: 16px; line-height: 36px; }
.mark svg { width: 45px; height: 36px; }
.ai { position: absolute; left: 6px; top: 5px; font: bold 15px/18px "Liberation Sans", sans-serif; }
```
